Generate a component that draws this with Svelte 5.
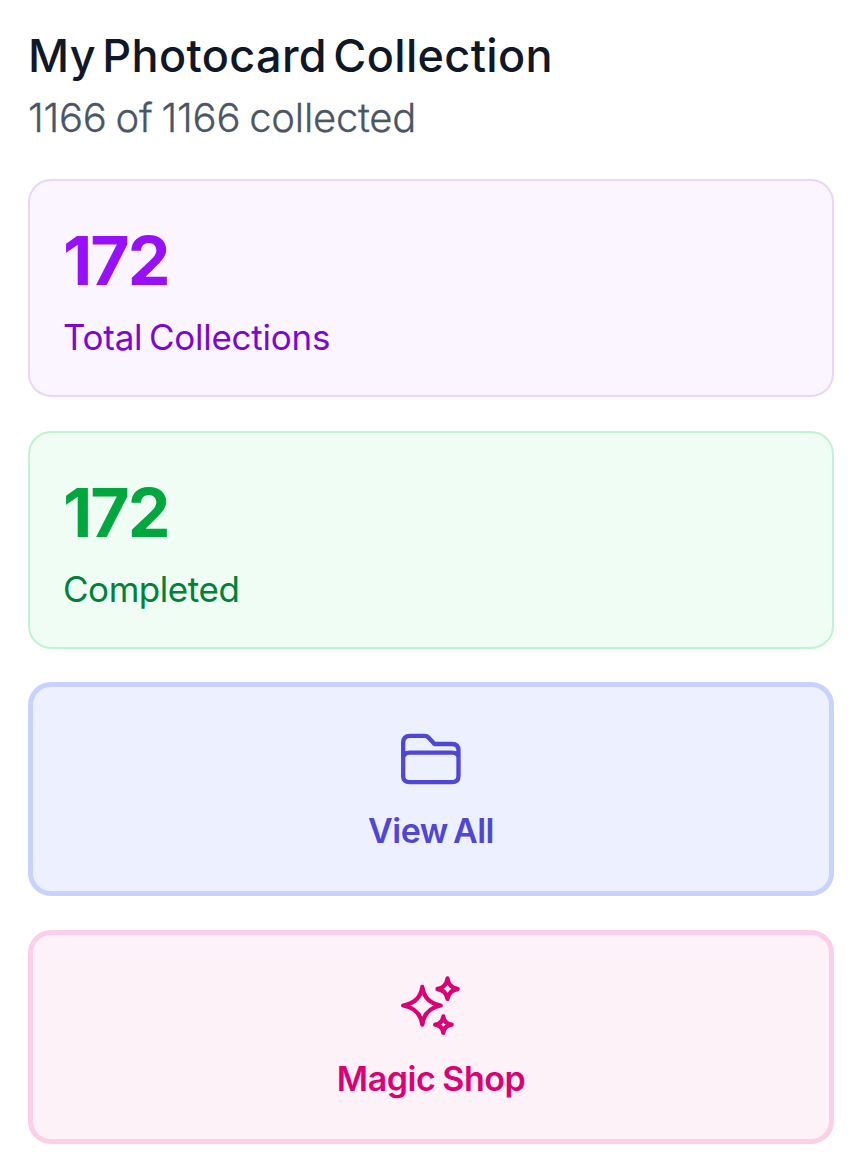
<script>
  const stats = [
    { value: 172, label: 'Total Collections', tone: 'purple' },
    { value: 172, label: 'Completed', tone: 'green' }
  ];
</script>

<main>
  <header>
    <h1>My Photocard Collection</h1>
    <p>1166 of 1166 collected</p>
  </header>

  {#each stats as stat}
    <section class="stat {stat.tone}">
      <strong>{stat.value}</strong>
      <span>{stat.label}</span>
    </section>
  {/each}

  <button class="action indigo">
    <svg viewBox="1 0 68 68" aria-hidden="true">
      <path d="M7.2 50.5V16.5Q7.2 9.8 13.9 9.8H28.5Q31 9.8 32.5 11.5L38.5 18H56Q62.5 18 62.5 24.5V50Q62.5 56.1 56 56.1H13.5Q7.2 56.1 7.2 50.5M7.2 31.5Q8.5 26.6 13.5 26.6H56.5Q61.5 26.6 62.5 31" />
    </svg>
    <span>View All</span>
  </button>

  <button class="action pink">
    <svg viewBox="1 0 68 68" aria-hidden="true">
      <path d="M26.3 13Q28.5 28.5 44.7 31.5Q28.5 34.5 26.3 50.5Q24.1 34.5 7.2 31.5Q24.1 28.5 26.3 13Z" />
      <path d="M51.5 4.5Q52.8 13.7 61.7 15Q52.8 16.3 51.5 24.8Q50.2 16.3 41.5 15Q50.2 13.7 51.5 4.5Z" />
      <path d="M47.3 42.5Q48.3 49.6 55.6 50.7Q48.3 51.8 47.3 58.8Q46.3 51.8 39.2 50.7Q46.3 49.6 47.3 42.5Z" />
    </svg>
    <span>Magic Shop</span>
  </button>
</main>

<style>
  :global(body) { margin: 0; background: #fff; }
  main {
    box-sizing: border-box;
    height: 1169px;
    padding: 27px 29px 0 28px;
    font-family: Inter, sans-serif;
    display: flex;
    flex-direction: column;
  }
  header { height: 152px; flex: none; white-space: nowrap; }
  h1 {
    margin: 0;
    font-size: 45px;
    line-height: 58px;
    font-weight: 500;
    letter-spacing: 0.35px;
    word-spacing: -6px;
    color: #101828;
  }
  p {
    margin: 4px 0 0;
    font-size: 40px;
    line-height: 57px;
    font-weight: 300;
    letter-spacing: -0.25px;
    word-spacing: -2px;
    -webkit-text-stroke: 0.3px currentColor;
    color: #4a5565;
  }
  .stat {
    box-sizing: border-box;
    flex: none;
    height: 218px;
    margin-bottom: 34px;
    padding: 43px 34px 0 33px;
    border: 2px solid;
    border-radius: 23px;
    display: flex;
    flex-direction: column;
  }
  .stat strong { font-size: 68px; line-height: 72px; font-weight: 700; letter-spacing: -2px; }
  .stat span { margin-top: 17px; font-size: 35px; line-height: 49px; letter-spacing: -0.25px; word-spacing: -3px; }
  .purple { background: #faf5ff; border-color: #e9d5fb; color: #7c08d0; }
  .purple strong { color: #9810fa; }
  .green { background: #effdf4; border-color: #c0f3d2; color: #008236; margin-bottom: 33px; }
  .green span { letter-spacing: -0.45px; }
  .green strong { color: #00a63e; }
  .action {
    box-sizing: border-box;
    flex: none;
    height: 214px;
    margin: 0 0 34px;
    padding: 39px 0 0;
    border: 5px solid;
    border-radius: 23px;
    font: 600 34px/48px Inter, sans-serif;
    letter-spacing: -0.5px;
    word-spacing: -1px;
    display: flex;
    flex-direction: column;
    align-items: center;
    justify-content: flex-start;
  }
  .action svg { width: 68px; height: 68px; fill: none; stroke: currentColor; stroke-width: 4.3; stroke-linecap: round; stroke-linejoin: round; }
  .action span { margin-top: 13px; }
  .indigo { background: #edf1ff; border-color: #c6d2ff; color: #4f46d5; word-spacing: -3px; }
  .pink { background: #fdf2f8; border-color: #fccee8; color: #dc0077; }
</style>
